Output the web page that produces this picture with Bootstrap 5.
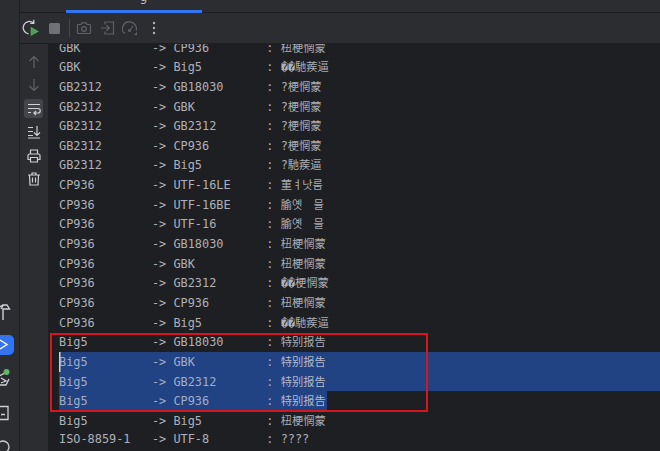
<!DOCTYPE html>
<html lang="en">
<head>
<meta charset="utf-8">
<title>Run console</title>
<link href="https://cdn.jsdelivr.net/npm/bootstrap@5.3.0/dist/css/bootstrap.min.css" rel="stylesheet">
<style>
html,body{height:100%;margin:0;background:#2b2d30;overflow:hidden}
.ide-frame{width:660px;height:451px;position:relative;overflow:hidden;background:#2b2d30}
.stripe{width:20px;flex:none;border-right:1px solid #1f2023;padding-top:298px}
.stripe svg{display:block;flex:none}
.launch-btn{width:14px;height:26px;margin-top:8px;margin-bottom:8px;background:#3574f0;border-radius:0 5px 5px 0;display:flex;align-items:center}
.tabrow{height:13px;flex:none;border-bottom:1px solid #1e1f22;position:relative}
.tabsel{margin-left:46px;width:136px;height:13px;border-bottom:3px solid #3574f0;overflow:hidden;text-align:center;padding-left:19px;color:#bcbec4;font:12px/1 "DejaVu Sans",sans-serif}
.tabsel span{display:block;margin-top:-9px}
.topbar{height:31px;flex:none;border-bottom:1px solid #1e1f22}
.topbar svg,.sidebar svg{display:block;flex:none}
.gap-stop{margin-left:8px}
.gap-next{margin-left:6px}
.gap-wide{margin-left:8px}
.gap-menu{margin-left:13px}
.vsep{width:1px;height:18px;background:#43454a;margin:0 0 0 8px}
.sidebar{width:28px;flex:none;padding-top:8px}
.sideslot{width:19px;height:19px;margin:0 0 4.5px 4px;border-radius:3px;display:flex;align-items:center;justify-content:center}
.sideslot.on{background:#43454a}
.console{background:#1e1f22;overflow:hidden;padding-left:11px}
.lines{margin-top:-6.4px;font-family:"DejaVu Sans Mono","Liberation Mono",monospace;font-size:11.88px;color:#aeb1b8}
.logline{height:19.65px;line-height:19.65px;white-space:pre}
.han{font-family:"Noto Sans CJK SC","Noto Sans CJK KR",sans-serif;font-size:11.25px;color:#a9acb3}
.picked{background:#214283;color:#a3adc6}
.picked .han{color:#b2b9cd}
.partial{width:268px}
.caret-mark{box-shadow:inset 1.5px 0 #d5d7dc}
.redbox{position:absolute;left:50px;top:333px;width:378px;height:79px;border:2px solid #d5161d;pointer-events:none}
</style>
</head>
<body>
<div class="ide-frame d-flex">
  <div class="stripe d-flex flex-column">
    <svg width="14" height="29" viewBox="0 0 14 29" fill="none" stroke="#ced0d6" stroke-width="1.4"><path d="M-2 10 L3 7 H7 L9.5 11 H3 V22 M-2 22 V12 M3 7.5 L1 11"/></svg>
    <div class="launch-btn"><svg width="14" height="14" viewBox="0 0 14 14" fill="none" stroke="#fff" stroke-width="1.4"><path d="M0 2 L7 6.5 L0 11"/></svg></div>
    <svg width="20" height="24" viewBox="0 0 20 24" fill="none" stroke="#ced0d6" stroke-width="1.3"><path d="M-1 13 L5 10 M-1 22 H6 L9 16 M1 15 L6 18 L1 20"/><circle cx="6.5" cy="9" r="3" fill="#5fb865" stroke="none"/></svg>
    <svg class="mt-3" width="20" height="20" viewBox="0 0 20 20" fill="none" stroke="#ced0d6" stroke-width="1.3"><path d="M-1 3.5 H8 V16.5 H-1 M1 11.5 H5"/></svg>
    <svg class="mt-2" width="20" height="20" viewBox="0 0 20 20" fill="none" stroke="#ced0d6" stroke-width="1.3"><circle cx="3" cy="16" r="6"/></svg>
  </div>
  <div class="flex-grow-1 d-flex flex-column" style="min-width:0">
    <div class="tabrow"><div class="tabsel"><span>g</span></div></div>
    <div class="topbar d-flex align-items-center">
      <svg width="20" height="20" viewBox="0 0 20 20" fill="none" stroke="#ced0d6" stroke-width="1.3"><path d="M13.5 5 A6.2 6.2 0 1 0 8.5 15.8 M13.8 1.8 V5.3 H10.2"/><path d="M11.3 9.8 L17.6 13.4 L11.3 17 Z" fill="#4f9a57" stroke="#58a45f"/></svg>
      <svg class="gap-stop" width="13" height="13" viewBox="0 0 13 13"><rect x="1" y="1" width="11" height="11" rx="1.5" fill="#6f7176"/></svg>
      <div class="vsep"></div>
      <svg class="gap-next" width="16" height="16" viewBox="0 0 16 16" fill="none" stroke="#5f6268" stroke-width="1.2"><path d="M2.5 4.5 H5 L6 2.8 H10 L11 4.5 H13.5 A1 1 0 0 1 14.5 5.5 V12.5 A1 1 0 0 1 13.5 13.5 H2.5 A1 1 0 0 1 1.5 12.5 V5.5 A1 1 0 0 1 2.5 4.5 Z"/><circle cx="8" cy="9" r="2.4"/></svg>
      <svg class="gap-wide" width="16" height="16" viewBox="0 0 16 16" fill="none" stroke="#5f6268" stroke-width="1.2"><path d="M5 4.5 V2 H13.5 V14 H5 V11.5 M1 8 H9 M6.5 5.2 L9.3 8 L6.5 10.8"/></svg>
      <svg class="gap-next" width="16" height="16" viewBox="0 0 16 16" fill="none" stroke="#5f6268" stroke-width="1.2"><path d="M3.5 13 H1.8 A7 7 0 1 1 14.2 10.5 M8 10 L11 6"/><circle cx="7.5" cy="10.5" r="1"/><path d="M12 15 L15 15 L15 12 Z" fill="#5f6268" stroke="none"/></svg>
      <svg class="gap-menu" width="6" height="16" viewBox="0 0 6 16" fill="#aeb1b8"><circle cx="3" cy="3" r="1.2"/><circle cx="3" cy="8" r="1.2"/><circle cx="3" cy="13" r="1.2"/></svg>
    </div>
    <div class="d-flex flex-grow-1" style="min-height:0">
      <div class="sidebar">
        <div class="sideslot"><svg width="14" height="14" viewBox="0 0 14 14" fill="none" stroke="#5f6268" stroke-width="1.2"><path d="M7 13 V1.5 M2.5 6 L7 1.5 L11.5 6"/></svg></div>
        <div class="sideslot"><svg width="14" height="14" viewBox="0 0 14 14" fill="none" stroke="#5f6268" stroke-width="1.2"><path d="M7 1 V12.5 M2.5 8 L7 12.5 L11.5 8"/></svg></div>
        <div class="sideslot on"><svg width="14" height="14" viewBox="0 0 14 14" fill="none" stroke="#ced0d6" stroke-width="1.2"><path d="M1 2.5 H13 M1 6.5 H11 A2 2 0 0 1 11 11 H7 M9 9 L7 11 L9 13 M1 10.5 H4"/></svg></div>
        <div class="sideslot"><svg width="14" height="14" viewBox="0 0 14 14" fill="none" stroke="#ced0d6" stroke-width="1.2"><path d="M1 2.5 H6 M1 6.5 H6 M1 10.5 H6 M1 13 H13 M10 1 V10.5 M7 7.5 L10 10.5 L13 7.5"/></svg></div>
        <div class="sideslot"><svg width="14" height="14" viewBox="0 0 14 14" fill="none" stroke="#ced0d6" stroke-width="1.2"><path d="M3.5 5 V1 H10.5 V5 M3.5 10.5 H1 V6.5 A1.5 1.5 0 0 1 2.5 5 H11.5 A1.5 1.5 0 0 1 13 6.5 V10.5 H10.5 M3.5 8.5 H10.5 V13 H3.5 Z"/></svg></div>
        <div class="sideslot"><svg width="14" height="14" viewBox="0 0 14 14" fill="none" stroke="#ced0d6" stroke-width="1.2"><path d="M1 3 H13 M5 3 V1 H9 V3 M2.5 3 L3 13 H11 L11.5 3 M5.5 5.5 V10.5 M8.5 5.5 V10.5"/></svg></div>
      </div>
      <div class="console flex-grow-1" style="min-width:0">
        <div class="lines">
<div class="logline">GBK          -> CP936        : <span class="han">杻梗惘蒙</span></div>
<div class="logline">GBK          -> Big5         : ��<span class="han">馳蒺逼</span></div>
<div class="logline">GB2312       -> GB18030      : ?<span class="han">梗惘蒙</span></div>
<div class="logline">GB2312       -> GBK          : ?<span class="han">梗惘蒙</span></div>
<div class="logline">GB2312       -> GB2312       : ?<span class="han">梗惘蒙</span></div>
<div class="logline">GB2312       -> CP936        : ?<span class="han">梗惘蒙</span></div>
<div class="logline">GB2312       -> Big5         : ?<span class="han">馳蒺逼</span></div>
<div class="logline">CP936        -> UTF-16LE     : <span class="han">菫ㅕ낫룸</span></div>
<div class="logline">CP936        -> UTF-16BE     : <span class="han">腧옛　믈</span></div>
<div class="logline">CP936        -> UTF-16       : <span class="han">腧옛　믈</span></div>
<div class="logline">CP936        -> GB18030      : <span class="han">杻梗惘蒙</span></div>
<div class="logline">CP936        -> GBK          : <span class="han">杻梗惘蒙</span></div>
<div class="logline">CP936        -> GB2312       : ��<span class="han">梗惘蒙</span></div>
<div class="logline">CP936        -> CP936        : <span class="han">杻梗惘蒙</span></div>
<div class="logline">CP936        -> Big5         : ��<span class="han">馳蒺逼</span></div>
<div class="logline">Big5         -> GB18030      : <span class="han">特别报告</span></div>
<div class="logline picked caret-mark">Big5         -> GBK          : <span class="han">特别报告</span></div>
<div class="logline picked">Big5         -> GB2312       : <span class="han">特别报告</span></div>
<div class="logline picked partial">Big5         -> CP936        : <span class="han">特别报告</span></div>
<div class="logline">Big5         -> Big5         : <span class="han">杻梗惘蒙</span></div>
<div class="logline">ISO-8859-1   -> UTF-8        : ????</div>
        </div>
      </div>
    </div>
  </div>
  <div class="redbox"></div>
</div>
<script src="https://cdn.jsdelivr.net/npm/bootstrap@5.3.0/dist/js/bootstrap.bundle.min.js"></script>
</body>
</html>
